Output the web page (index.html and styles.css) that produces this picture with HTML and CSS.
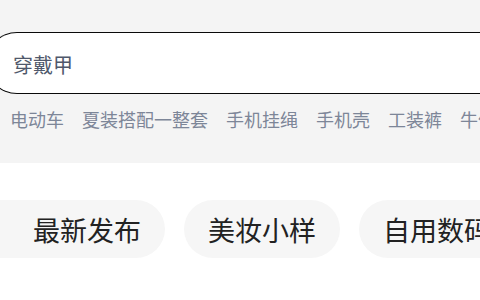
FILE: index.html
```html
<!DOCTYPE html>
<html lang="zh-CN">
<head>
<meta charset="utf-8">
<link rel="stylesheet" href="styles.css">
</head>
<body>
<div class="page">
  <div class="top">
    <div class="search"><span class="search-text">穿戴甲</span></div>
    <div class="tags">
      <span class="tag">电动车</span>
      <span class="tag">夏装搭配一整套</span>
      <span class="tag">手机挂绳</span>
      <span class="tag">手机壳</span>
      <span class="tag">工装裤</span>
      <span class="tag">牛仔裤</span>
    </div>
  </div>
  <div class="chips">
    <span class="chip chip-first">最新发布</span>
    <span class="chip">美妆小样</span>
    <span class="chip">自用数码</span>
  </div>
</div>
</body>
</html>
```

FILE: styles.css
```css
html, body {
  margin: 0;
  padding: 0;
  background: #ffffff;
}
body {
  width: 480px;
  height: 300px;
  overflow: hidden;
  font-family: "Noto Sans CJK SC", "Noto Sans", sans-serif;
}
.page {
  width: 480px;
  overflow: hidden;
}
.top {
  background: #f4f4f4;
  height: 163px;
  padding-top: 32px;
  box-sizing: border-box;
}
.search {
  margin-left: -14px;
  margin-right: -80px;
  height: 62px;
  box-sizing: border-box;
  border: 1.5px solid #0a0a0a;
  border-right: none;
  border-radius: 31px 0 0 31px;
  background: #ffffff;
  display: flex;
  align-items: center;
  padding-left: 26px;
  padding-top: 3px;
}
.search-text {
  font-size: 20px;
  color: #4f586b;
  line-height: 1;
}
.tags {
  display: flex;
  gap: 18px;
  padding-left: 10px;
  margin-top: 13px;
  white-space: nowrap;
}
.tag {
  font-size: 18px;
  line-height: 24px;
  color: #7d8698;
  flex-shrink: 0;
}
.chips {
  display: flex;
  gap: 19px;
  margin-top: 37px;
  margin-left: -40px;
  white-space: nowrap;
}
.chip {
  flex-shrink: 0;
  height: 58px;
  border-radius: 29px;
  background: #f6f6f6;
  font-size: 27px;
  color: #222222;
  padding: 0 24px;
  display: flex;
  align-items: center;
}
.chip-first {
  padding-left: 73px;
}
```
